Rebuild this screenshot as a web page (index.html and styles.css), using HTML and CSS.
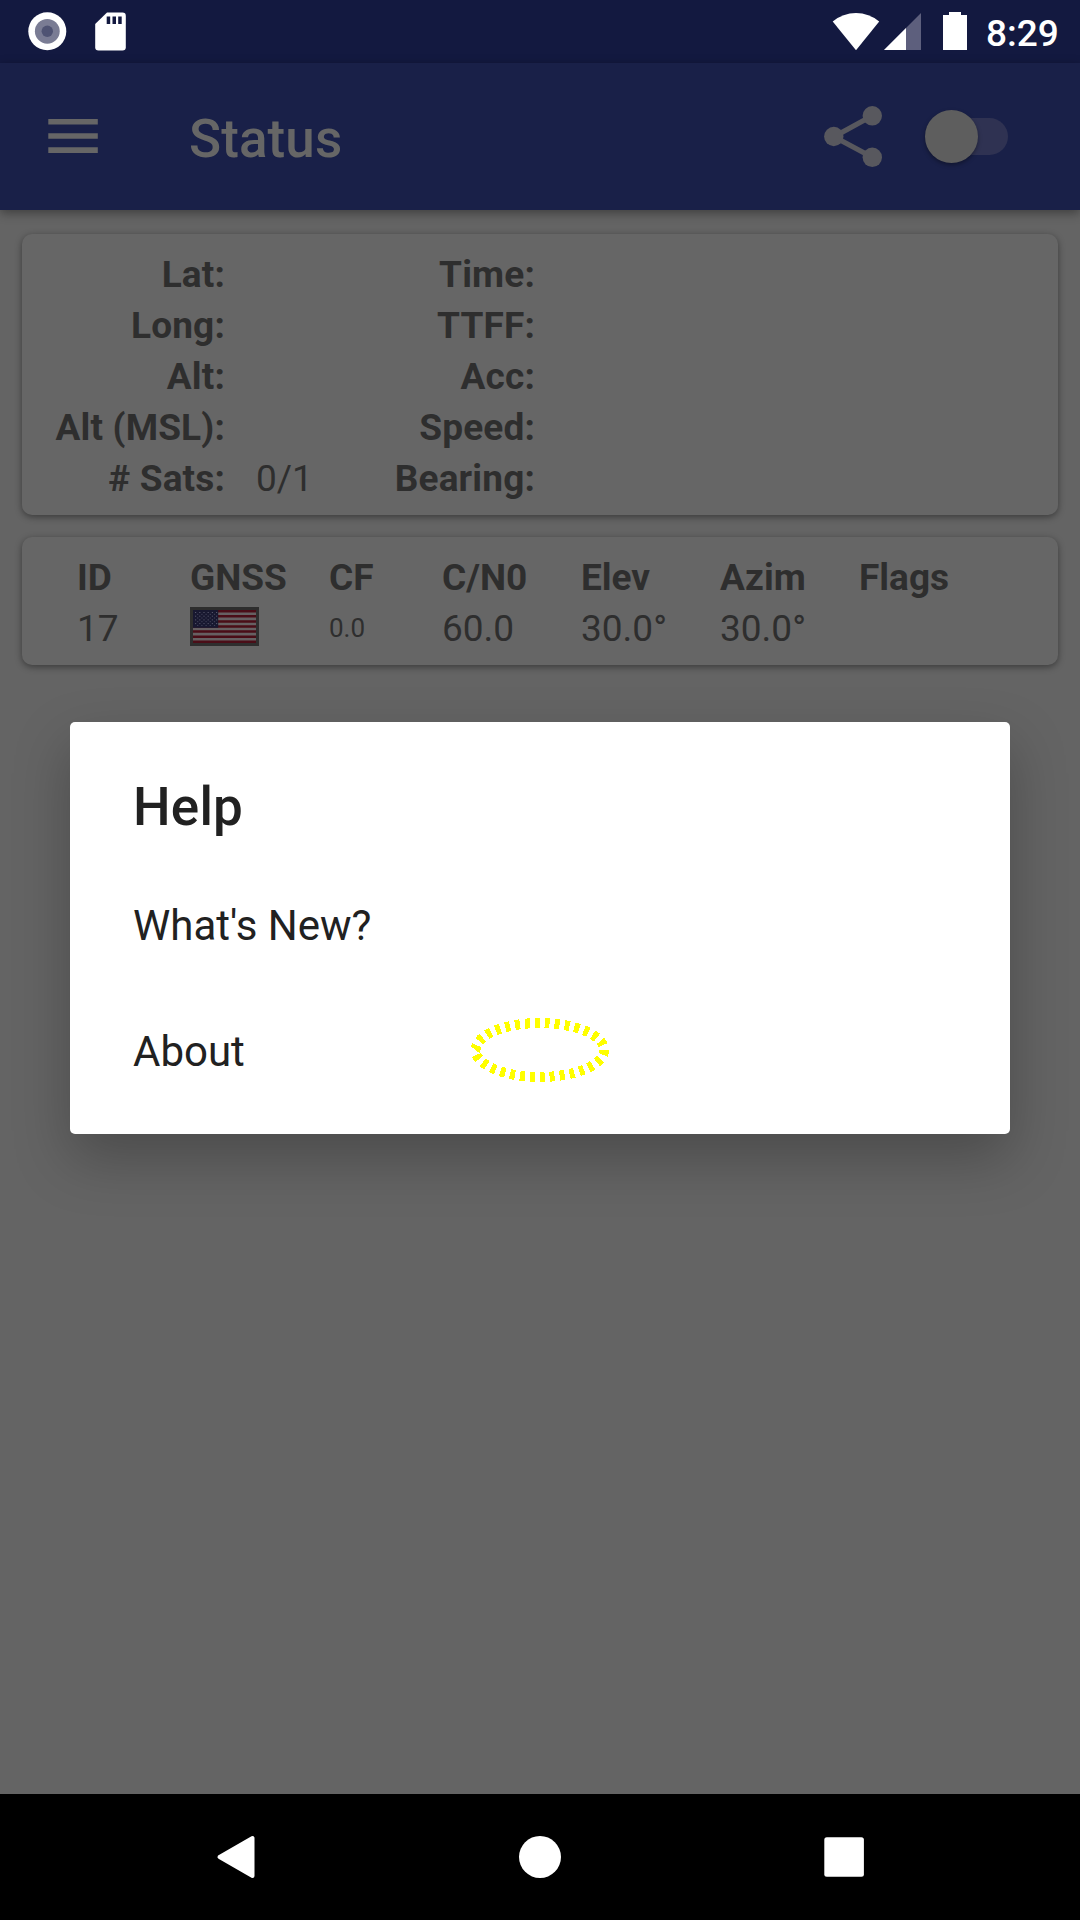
FILE: index.html
```html
<!DOCTYPE html>
<html lang="en">
<head>
<meta charset="utf-8">
<title>Status</title>
<link rel="stylesheet" href="styles.css">
</head>
<body>
<div class="screen">
  <header class="statusbar">
    <svg class="statusbar-left" width="130" height="63" viewBox="0 0 130 63">
      <circle cx="47.3" cy="31.3" r="19" fill="#fff"/>
      <circle cx="47.3" cy="31.3" r="12.4" fill="#7a7c94"/>
      <circle cx="47.3" cy="31.3" r="5.7" fill="#4f5373"/>
      <path d="M107 12.5H122.5Q125.800 12.500 125.800 15.800V47.200Q125.800 50.500 122.500 50.500H98.500Q95.200 50.500 95.200 47.200V24Z" fill="#fff"/>
      <path d="M106.700 16.500h3.500v7.500h-3.500zM112.500 16.500h3.500v7.500h-3.500zM118.200 16.500h3.500v7.500h-3.500z" fill="#131940"/>
    </svg>
    <svg class="statusbar-right" width="140" height="63" viewBox="830 0 140 63">
      <path d="M832.700 21.500Q843 13 856 13T879.200 21.500L856 50.300Z" fill="#fff"/>
      <path d="M884 50L921 13V50Z" fill="#5d5f7d"/>
      <path d="M884 50L906 28V50Z" fill="#fff"/>
      <path d="M949 12h12v3h6v35h-24v-35h6z" fill="#fff"/>
    </svg>
    <span class="clock">8:29</span>
  </header>

  <div class="toolbar">
    <svg class="menu-icon" width="50" height="36" viewBox="0 0 50 36">
      <path d="M.3 1h49.500v5.600H.3zM.3 15.200h49.500v5.600H.3zM.3 29.300h49.500v5.600H.3z" fill="#666"/>
    </svg>
    <h1 class="title">Status</h1>
    <svg class="share-icon" width="60" height="64" viewBox="824 104.500 60 64">
      <path d="M872.300 115.300L834 136.200L872.300 156.800" fill="none" stroke="#58585e" stroke-width="5.200"/>
      <g fill="#58585e">
        <circle cx="872.300" cy="115.300" r="9.700"/>
        <circle cx="833.800" cy="136" r="9.700"/>
        <circle cx="872.300" cy="156.800" r="9.700"/>
      </g>
    </svg>
    <div class="switch"><div class="thumb"></div></div>
  </div>

  <main class="content">
    <section class="card location">
      <b>Lat:</b><span></span><b>Time:</b><span></span>
      <b>Long:</b><span></span><b>TTFF:</b><span></span>
      <b>Alt:</b><span></span><b>Acc:</b><span></span>
      <b>Alt (MSL):</b><span></span><b>Speed:</b><span></span>
      <b># Sats:</b><span>0/1</span><b>Bearing:</b><span></span>
    </section>
    <section class="card satellites">
      <b>ID</b><b>GNSS</b><b>CF</b><b>C/N0</b><b>Elev</b><b>Azim</b><b>Flags</b>
      <span>17</span>
      <svg class="flag" width="69" height="39" viewBox="0 0 69 39">
        <path d="M0 0h69v39H0z" fill="#2e2e2e"/>
        <path d="M3 3h63v33H3z" fill="#666062"/>
        <path d="M3 4.270H66M3 9.350H66M3 14.420H66M3 19.500H66M3 24.580H66M3 29.650H66M3 34.730H66" stroke="#4a0d17" stroke-width="2.540"/>
        <path d="M3 3h25.200v17.800H3z" fill="#181830"/>
        <path d="M5 5.500H28M5 9.200H28M5 12.900H28M5 16.600H28" stroke="#55556a" stroke-width="1" stroke-dasharray="1.200 3"/>
        <path d="M7.100 7.300H28M7.100 11H28M7.100 14.700H28M7.100 18.400H28" stroke="#45455c" stroke-width="1" stroke-dasharray="1.200 3"/>
      </svg>
      <span class="small">0.0</span><span>60.0</span><span>30.0°</span><span>30.0°</span><span></span>
    </section>
  </main>

  <nav class="navbar">
    <svg width="42" height="44" viewBox="0 0 42 44"><path d="M3.500 22L36.500 3V41Z" fill="#fff" stroke="#fff" stroke-width="4" stroke-linejoin="round"/></svg>
    <svg width="44" height="44" viewBox="0 0 44 44"><circle cx="21" cy="22" r="21" fill="#fff"/></svg>
    <svg width="42" height="44" viewBox="0 0 42 44"><rect x="1.300" y="2.200" width="39.600" height="39.600" rx="2.500" fill="#fff"/></svg>
  </nav>

  <div class="dialog" role="dialog">
    <h2 class="dialog-title">Help</h2>
    <div class="item">What's New?</div>
    <div class="item">About</div>
    <svg class="focus" width="140" height="66" viewBox="0 0 140 66">
      <ellipse cx="69.800" cy="33" rx="64.300" ry="27" pathLength="300" fill="none" stroke="#ff0" stroke-width="10" stroke-dasharray="5 5" shape-rendering="crispEdges"/>
    </svg>
  </div>
</div>
</body>
</html>
```
FILE: styles.css
```css
* { box-sizing: border-box; }
body {
  margin: 0;
  font-family: Roboto, "Liberation Sans", sans-serif;
}
.screen {
  position: relative;
  display: flex;
  flex-direction: column;
  width: 1080px;
  height: 1920px;
  background: #646464;
  overflow: hidden;
}
.statusbar {
  display: flex;
  height: 63px;
  background: #131940;
  color: #fff;
}
.statusbar-right { margin-left: auto; }
.clock {
  width: 110px;
  padding-left: 16px;
  font-size: 37px;
  font-weight: 500;
  line-height: 67px;
}
.toolbar {
  display: flex;
  align-items: center;
  height: 147px;
  padding: 0 72px 0 48px;
  background: #192048;
  box-shadow: 0 3px 10px rgba(0, 0, 0, .38);
}
.menu-icon { margin-bottom: 2px; }
.title {
  margin: 0 auto 0 91px;
  padding-top: 4px;
  font-size: 53px;
  font-weight: 500;
  line-height: 60px;
  letter-spacing: .1px;
  color: #666;
}
.share-icon { margin-right: 45px; }
.switch {
  width: 79px;
  height: 37px;
  border-radius: 19px;
  background: #2f3252;
}
.thumb {
  width: 53px;
  height: 53px;
  margin: -8px 0 0 -4.500px;
  border-radius: 50%;
  background: #5e5e5e;
  box-shadow: 0 2px 4px rgba(0, 0, 0, .35);
}
.content {
  display: flex;
  flex: 1;
  flex-direction: column;
  gap: 22px;
  padding: 24px 22px;
}
.card {
  display: grid;
  padding: 15px 0 11px;
  border-radius: 10px;
  background: #666;
  color: #2e2e2e;
  font-size: 37px;
  line-height: 51px;
  grid-auto-rows: 51px;
  box-shadow: 0 2px 7px rgba(0, 0, 0, .42);
}
.location { grid-template-columns: 203px 107px 203px 1fr; }
.location b {
  text-align: right;
  letter-spacing: .15px;
  white-space: nowrap;
}
.location span { padding-left: 31px; }
.satellites {
  grid-template-columns: 113px 139px 113px 139px 139px 139px 1fr;
  padding-left: 55px;
}
.flag { margin-top: 4px; }
.small { font-size: 26px; }
.navbar {
  display: flex;
  justify-content: space-between;
  align-items: center;
  height: 126px;
  padding: 0 215px 0 216px;
  background: #000;
}
.dialog {
  position: absolute;
  top: 722px;
  left: 70px;
  width: 940px;
  height: 412px;
  padding: 54px 63px 20px;
  border-radius: 5px;
  background: #fff;
  color: #212121;
  box-shadow: 0 24px 56px rgba(0, 0, 0, .25);
}
.dialog-title {
  margin: 0 0 25px;
  font-size: 53px;
  font-weight: 500;
  line-height: 62px;
  letter-spacing: .2px;
}
.item {
  height: 126px;
  font-size: 42px;
  line-height: 126px;
}
.focus {
  position: absolute;
  top: 295px;
  left: 400px;
}
```
